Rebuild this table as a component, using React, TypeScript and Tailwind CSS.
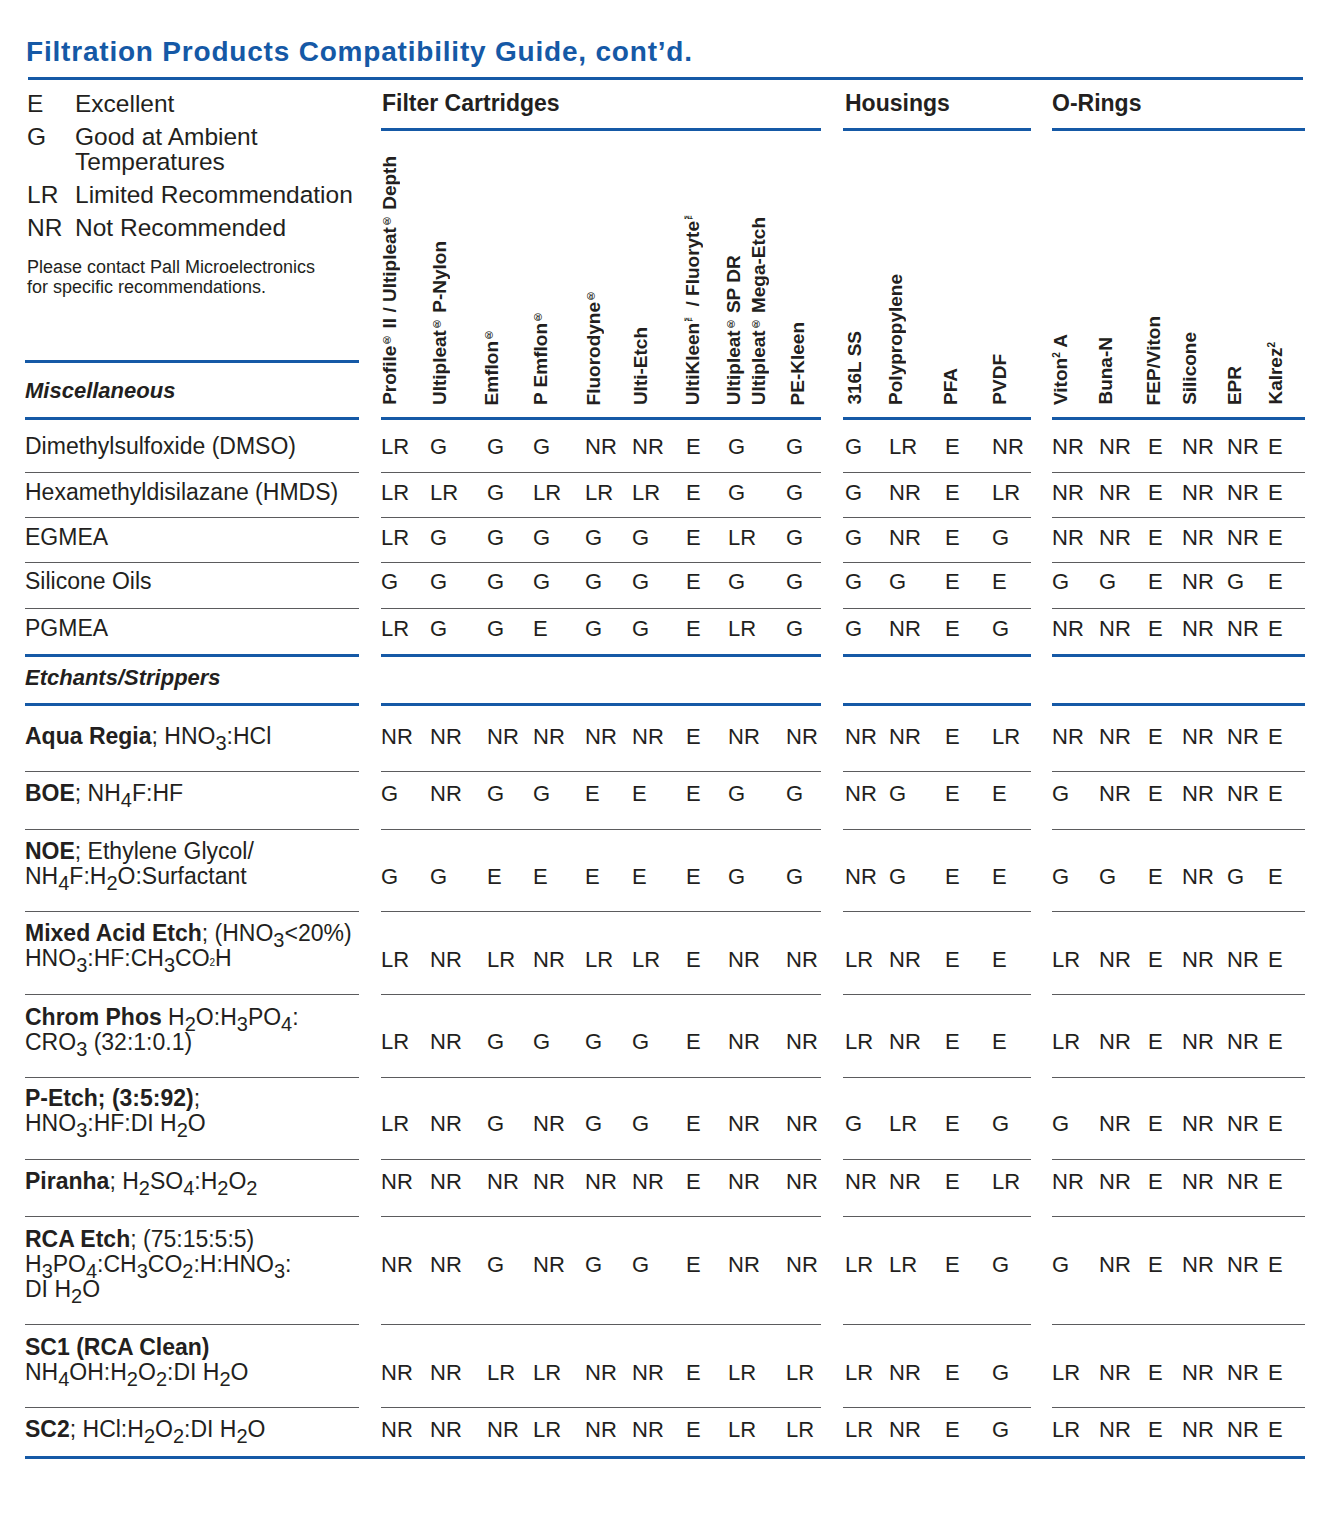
import type { ReactNode } from "react";

// small marks used in the rotated column heads
const R = () => <sup className="static align-[3px] text-[11px] leading-none">®</sup>;
const TM = () => <sup className="static align-[4px] text-[10px] leading-none">™</sup>;
const Two = () => <sup className="static align-[4px] text-[10px] leading-none">2</sup>;

// chemistry subscripts in the row labels
const Sb = ({ children }: { children: ReactNode }) => (
  <sub className="bottom-[-6px] text-[20px]">{children}</sub>
);
const B = ({ children }: { children: ReactNode }) => <span className="font-bold">{children}</span>;

type Head = { label: ReactNode; cls: string };
type Group = {
  title: string;
  box: string;
  titlePad: string;
  colPad: string;
  cols: string[];
  heads: Head[];
};

const groups: Group[] = [
  {
    title: "Filter Cartridges",
    box: "ml-[22px] w-[440px]",
    titlePad: "pl-[1px]",
    colPad: "",
    cols: ["w-[49px]", "w-[57px]", "w-[46px]", "w-[52px]", "w-[47px]", "w-[54px]", "w-[42px]", "w-[58px]", "w-[35px]"],
    heads: [
      { label: <>Profile<R /> II / Ultipleat<R /> Depth</>, cls: "ml-[-1px] leading-[20px]" },
      { label: <>Ultipleat<R /> P-Nylon</>, cls: "ml-0 leading-[20px]" },
      { label: <>Emflon<R /></>, cls: "ml-[-5px] leading-[20px]" },
      { label: <>P Emflon<R /></>, cls: "ml-[-2px] leading-[20px]" },
      { label: <>Fluorodyne<R /></>, cls: "ml-[-1px] leading-[20px]" },
      { label: "Ulti-Etch", cls: "ml-[-1px] leading-[20px]" },
      { label: <>UltiKleen<TM /> / Fluoryte<TM /></>, cls: "ml-[-3px] leading-[20px]" },
      { label: <>Ultipleat<R /> SP DR<br />Ultipleat<R /> Mega-Etch</>, cls: "ml-[-7px] leading-[25px]" },
      { label: "PE-Kleen", cls: "ml-[2px] leading-[20px]" },
    ],
  },
  {
    title: "Housings",
    box: "ml-[22px] w-[188px]",
    titlePad: "pl-[2px]",
    colPad: "pl-[2px]",
    cols: ["w-[44px]", "w-[56px]", "w-[47px]", "w-[39px]"],
    heads: [
      { label: "316L SS", cls: "ml-0 leading-[20px]" },
      { label: "Polypropylene", cls: "ml-[-3px] leading-[20px]" },
      { label: "PFA", cls: "ml-[-4px] leading-[20px]" },
      { label: "PVDF", cls: "ml-[-2px] leading-[20px]" },
    ],
  },
  {
    title: "O-Rings",
    box: "ml-[21px] w-[253px]",
    titlePad: "",
    colPad: "",
    cols: ["w-[47px]", "w-[49px]", "w-[34px]", "w-[45px]", "w-[41px]", "w-[37px]"],
    heads: [
      { label: <>Viton<Two /> A</>, cls: "ml-[-1px] leading-[20px]" },
      { label: "Buna-N", cls: "ml-[-3px] leading-[20px]" },
      { label: "FEP/Viton", cls: "ml-[-4px] leading-[20px]" },
      { label: "Silicone", cls: "ml-[-2px] leading-[20px]" },
      { label: "EPR", cls: "ml-[-2px] leading-[20px]" },
      { label: <>Kalrez<Two /></>, cls: "ml-[-2px] leading-[20px]" },
    ],
  },
];

type Row = { label: ReactNode; h: string; pt: string; dpt: string; data: string; last?: boolean };

const misc: Row[] = [
  { label: "Dimethylsulfoxide (DMSO)", h: "h-[53px]", pt: "pt-[14px]", dpt: "pt-[14px]", data: "LR G G G NR NR E G G | G LR E NR | NR NR E NR NR E" },
  { label: "Hexamethyldisilazane (HMDS)", h: "h-[45px]", pt: "pt-[7px]", dpt: "pt-[7px]", data: "LR LR G LR LR LR E G G | G NR E LR | NR NR E NR NR E" },
  { label: "EGMEA", h: "h-[45px]", pt: "pt-[7px]", dpt: "pt-[7px]", data: "LR G G G G G E LR G | G NR E G | NR NR E NR NR E" },
  { label: "Silicone Oils", h: "h-[46px]", pt: "pt-[6px]", dpt: "pt-[6px]", data: "G G G G G G E G G | G G E E | G G E NR G E" },
  { label: "PGMEA", h: "h-[45px]", pt: "pt-[7px]", dpt: "pt-[7px]", data: "LR G G E G G E LR G | G NR E G | NR NR E NR NR E", last: true },
];

const etchants: Row[] = [
  {
    label: <><B>Aqua Regia</B>; HNO<Sb>3</Sb>:HCl</>,
    h: "h-[66px]", pt: "pt-[18px]", dpt: "pt-[18px]",
    data: "NR NR NR NR NR NR E NR NR | NR NR E LR | NR NR E NR NR E",
  },
  {
    label: <><B>BOE</B>; NH<Sb>4</Sb>F:HF</>,
    h: "h-[58px]", pt: "pt-[9px]", dpt: "pt-[9px]",
    data: "G NR G G E E E G G | NR G E E | G NR E NR NR E",
  },
  {
    label: <><B>NOE</B>; Ethylene Glycol/<br />NH<Sb>4</Sb>F:H<Sb>2</Sb>O:Surfactant</>,
    h: "h-[82px]", pt: "pt-[9px]", dpt: "pt-[34px]",
    data: "G G E E E E E G G | NR G E E | G G E NR G E",
  },
  {
    label: <><B>Mixed Acid Etch</B>; (HNO<Sb>3</Sb>&lt;20%)<br />HNO<Sb>3</Sb>:HF:CH<Sb>3</Sb>CO<span className="text-[10px]">2</span>H</>,
    h: "h-[83px]", pt: "pt-[9px]", dpt: "pt-[35px]",
    data: "LR NR LR NR LR LR E NR NR | LR NR E E | LR NR E NR NR E",
  },
  {
    label: <><B>Chrom Phos</B> H<Sb>2</Sb>O:H<Sb>3</Sb>PO<Sb>4</Sb>:<br />CRO<Sb>3</Sb> (32:1:0.1)</>,
    h: "h-[83px]", pt: "pt-[10px]", dpt: "pt-[34px]",
    data: "LR NR G G G G E NR NR | LR NR E E | LR NR E NR NR E",
  },
  {
    label: <><B>P-Etch; (3:5:92)</B>;<br />HNO<Sb>3</Sb>:HF:DI H<Sb>2</Sb>O</>,
    h: "h-[82px]", pt: "pt-[8px]", dpt: "pt-[33px]",
    data: "LR NR G NR G G E NR NR | G LR E G | G NR E NR NR E",
  },
  {
    label: <><B>Piranha</B>; H<Sb>2</Sb>SO<Sb>4</Sb>:H<Sb>2</Sb>O<Sb>2</Sb></>,
    h: "h-[57px]", pt: "pt-[9px]", dpt: "pt-[9px]",
    data: "NR NR NR NR NR NR E NR NR | NR NR E LR | NR NR E NR NR E",
  },
  {
    label: <><B>RCA Etch</B>; (75:15:5:5)<br />H<Sb>3</Sb>PO<Sb>4</Sb>:CH<Sb>3</Sb>CO<Sb>2</Sb>:H:HNO<Sb>3</Sb>:<br />DI H<Sb>2</Sb>O</>,
    h: "h-[108px]", pt: "pt-[10px]", dpt: "pt-[35px]",
    data: "NR NR G NR G G E NR NR | LR LR E G | G NR E NR NR E",
  },
  {
    label: <><B>SC1 (RCA Clean)</B><br />NH<Sb>4</Sb>OH:H<Sb>2</Sb>O<Sb>2</Sb>:DI H<Sb>2</Sb>O</>,
    h: "h-[83px]", pt: "pt-[10px]", dpt: "pt-[35px]",
    data: "NR NR LR LR NR NR E LR LR | LR NR E G | LR NR E NR NR E",
  },
  {
    label: <><B>SC2</B>; HCl:H<Sb>2</Sb>O<Sb>2</Sb>:DI H<Sb>2</Sb>O</>,
    h: "h-[48px]", pt: "pt-[9px]", dpt: "pt-[9px]",
    data: "NR NR NR LR NR NR E LR LR | LR NR E G | LR NR E NR NR E",
    last: true,
  },
];

function SplitRule() {
  return (
    <div className="flex h-[3px]">
      <div className="w-[334px] bg-[#1559a6]" />
      <div className="ml-[22px] w-[440px] bg-[#1559a6]" />
      <div className="ml-[22px] w-[188px] bg-[#1559a6]" />
      <div className="ml-[21px] w-[253px] bg-[#1559a6]" />
    </div>
  );
}

function DataRow({ row }: { row: Row }) {
  const sets = row.data.split(" | ").map((s) => s.split(" "));
  const line = row.last ? "" : "border-b border-[#5b5b5d]";
  return (
    <div className={`flex ${row.h}`}>
      <div className={`w-[334px] whitespace-nowrap text-[23px] leading-[25px] ${line} ${row.pt}`}>
        {row.label}
      </div>
      {groups.map((g, gi) => (
        <div key={g.title} className={`flex ${g.box} ${g.colPad} ${line} ${row.dpt}`}>
          {g.cols.map((c, ci) => (
            <div key={ci} className={`${c} text-[22px] leading-[25px]`}>
              {sets[gi][ci]}
            </div>
          ))}
        </div>
      ))}
    </div>
  );
}

export default function App() {
  return (
    <div className="min-h-[1524px] w-[1334px] bg-white pl-[25px] font-['Liberation_Sans',Arial,sans-serif] text-[#231f20]">
      <div className="pt-[38px]">
        <h1 className="pl-[1px] text-[28px] font-bold leading-[28px] tracking-[0.8px] text-[#1559a6]">
          Filtration Products Compatibility Guide, cont’d.
        </h1>
        <div className="ml-[3px] mt-[11px] h-[3px] w-[1275px] bg-[#1559a6]" />
      </div>

      <div className="flex h-[337px]">
        <div className="flex w-[334px] flex-col">
          <div className="grid grid-cols-[48px_1fr] gap-y-[8px] whitespace-nowrap pl-[2px] pt-[11px] text-[24.5px] leading-[25px]">
            <div>E</div>
            <div>Excellent</div>
            <div>G</div>
            <div>
              Good at Ambient
              <br />
              Temperatures
            </div>
            <div>LR</div>
            <div>Limited Recommendation</div>
            <div>NR</div>
            <div>Not Recommended</div>
          </div>
          <p className="mt-[17px] pl-[2px] text-[18px] leading-[20px]">
            Please contact Pall Microelectronics
            <br />
            for specific recommendations.
          </p>
          <div className="mt-auto h-[3px] bg-[#1559a6]" />
          <div className="h-[54px] pt-[15px] text-[22px] font-bold italic leading-[25px]">Miscellaneous</div>
        </div>

        {groups.map((g) => (
          <div key={g.title} className={`flex flex-col ${g.box}`}>
            <div className={`pt-[11px] text-[23px] font-bold leading-[25px] ${g.titlePad}`}>{g.title}</div>
            <div className="mt-[12px] h-[3px] bg-[#1559a6]" />
            <div className={`flex flex-1 pb-[12px] ${g.colPad}`}>
              {g.cols.map((c, ci) => (
                <div key={ci} className={`flex flex-col justify-end ${c}`}>
                  <span
                    className={`self-start whitespace-nowrap text-[19px] font-bold [writing-mode:vertical-rl] rotate-180 ${g.heads[ci].cls}`}
                  >
                    {g.heads[ci].label}
                  </span>
                </div>
              ))}
            </div>
          </div>
        ))}
      </div>

      <SplitRule />
      {misc.map((r, i) => (
        <DataRow key={i} row={r} />
      ))}

      <SplitRule />
      <div className="h-[46px] w-[334px] pt-[8px] text-[22px] font-bold italic leading-[25px]">Etchants/Strippers</div>
      <SplitRule />
      {etchants.map((r, i) => (
        <DataRow key={i} row={r} />
      ))}
      <div className="h-[3px] w-[1280px] bg-[#1559a6]" />
    </div>
  );
}
